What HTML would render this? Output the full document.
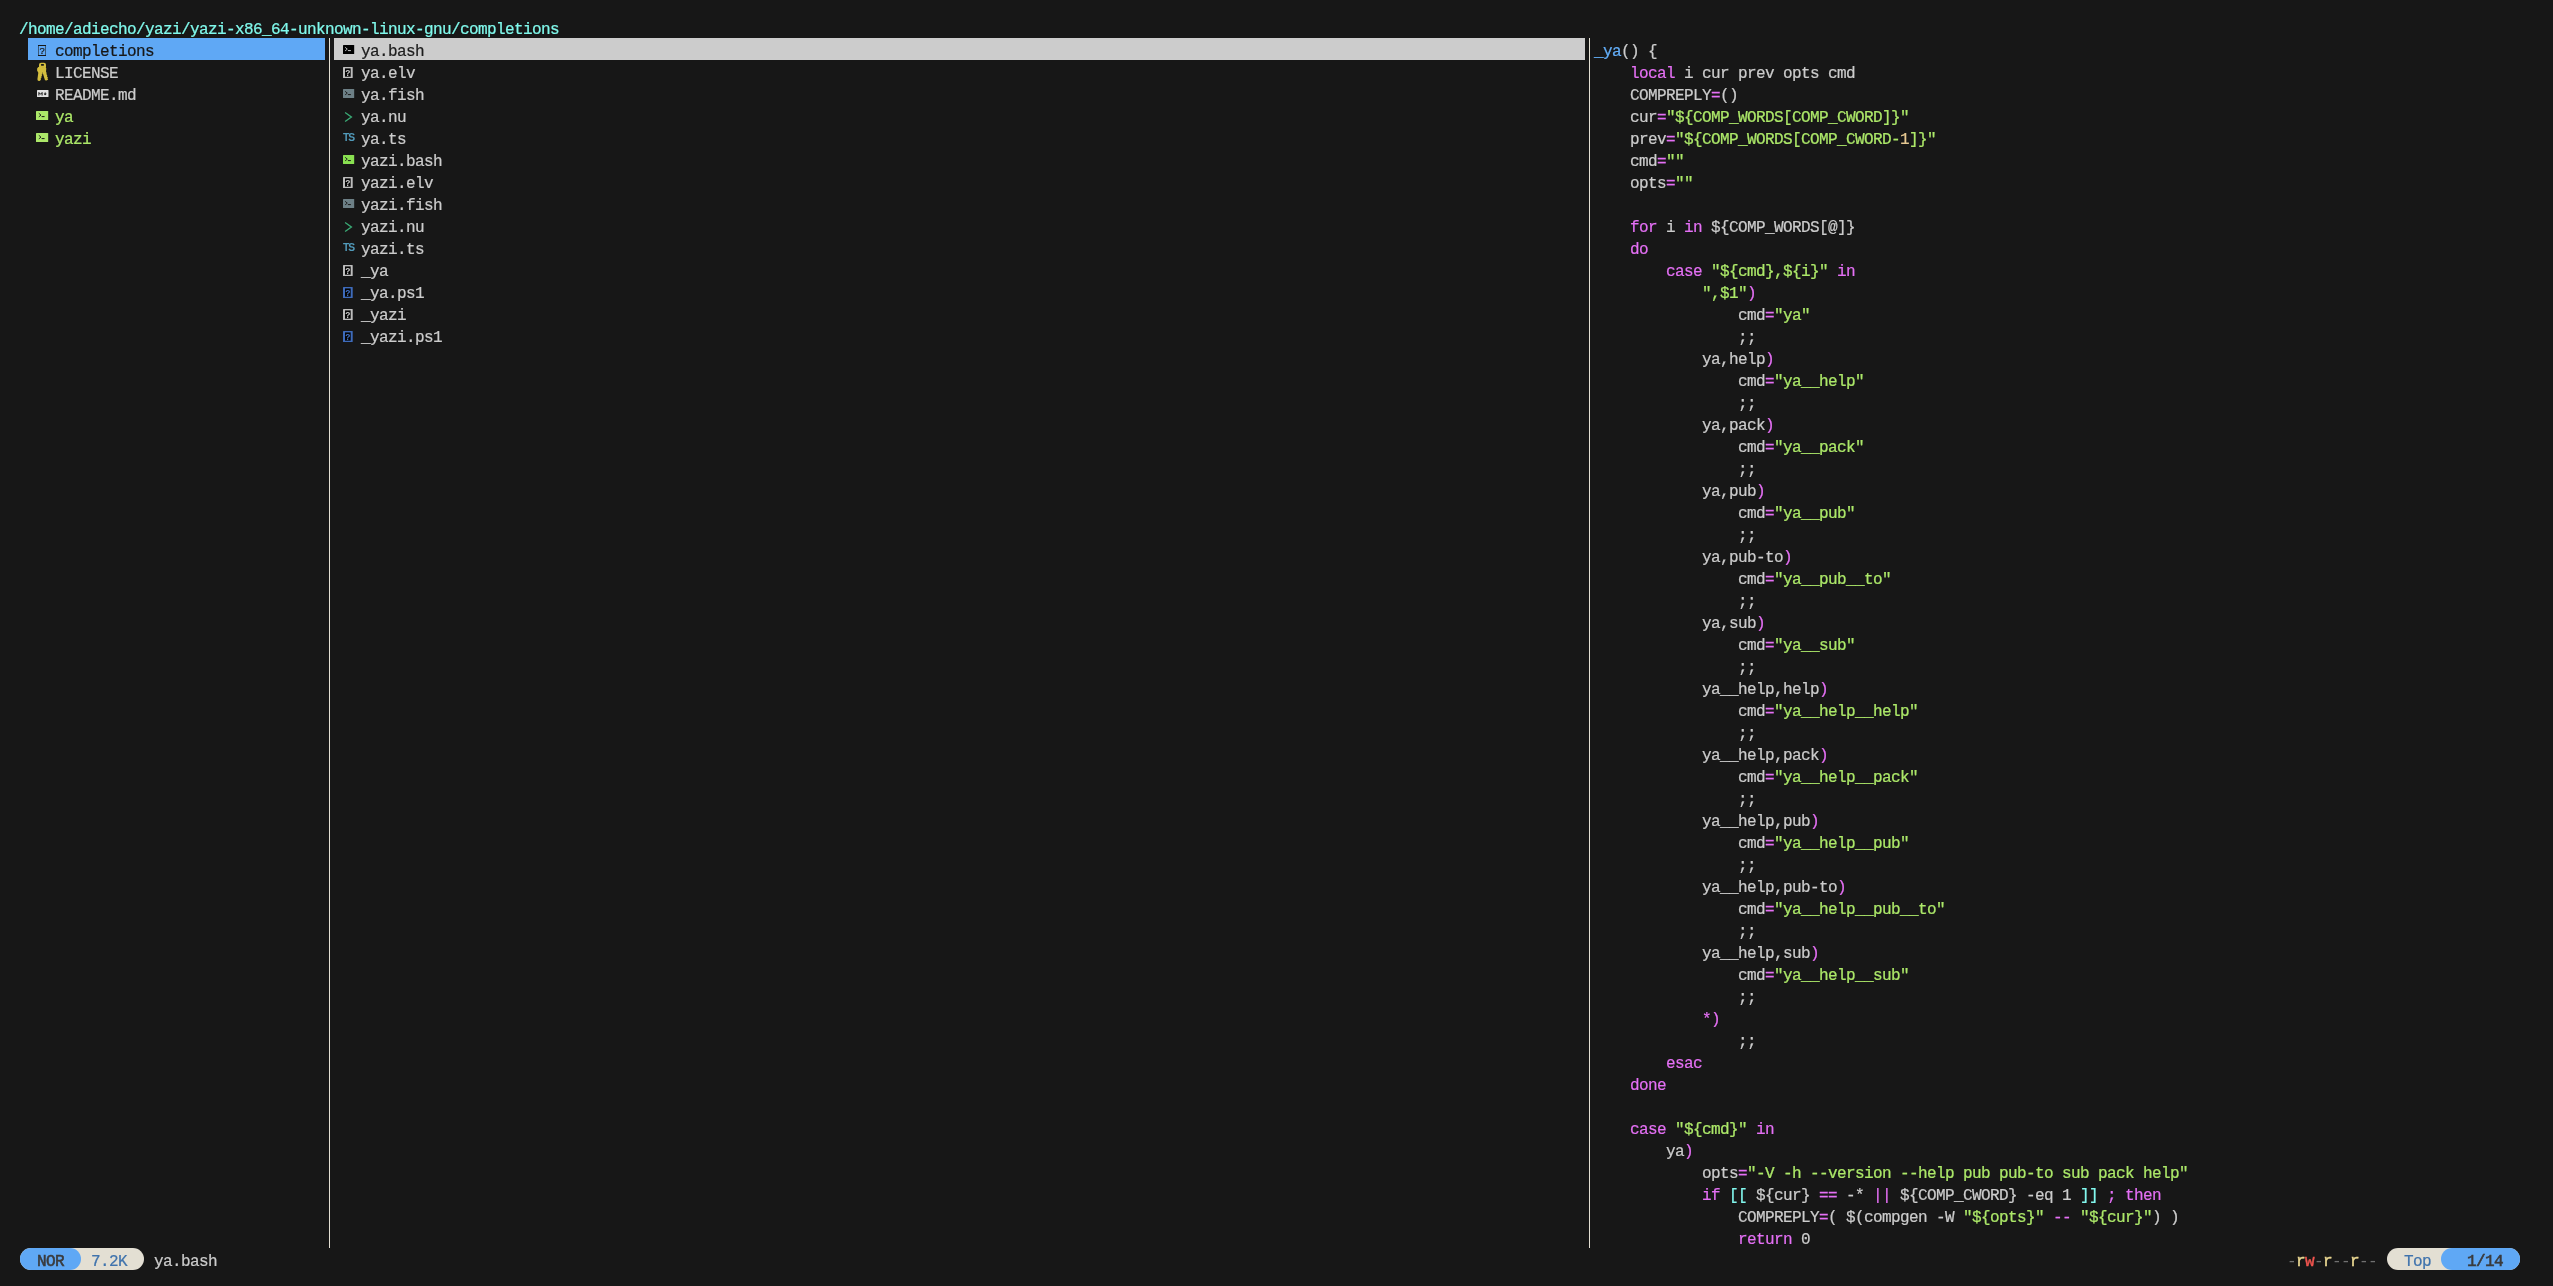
<!DOCTYPE html>
<html><head><meta charset="utf-8"><title>yazi</title><style>
*{margin:0;padding:0;box-sizing:border-box}
html,body{width:2553px;height:1286px;background:#171717;overflow:hidden}
body{position:relative;font-family:"Liberation Mono","DejaVu Sans Mono",monospace;font-size:16px;letter-spacing:-0.6016px;color:#cccccc;line-height:22px}
.t{position:absolute;white-space:pre;height:22px;line-height:22px;padding-top:3px;-webkit-text-stroke:0.22px currentColor}
#root{position:absolute;left:0;top:0;width:2553px;height:1286px;will-change:transform}
.b{position:absolute}
.m{color:#e570f5}.s{color:#ace869}.f{color:#63aef8}.c{color:#82f8ee}.n{color:#e6c892}.g{color:#ace869}
svg{position:absolute;overflow:visible}
</style></head><body><div id="root">
<div class="t" style="left:19px;top:16px;color:#80f9ec">/home/adiecho/yazi/yazi-x86_64-unknown-linux-gnu/completions</div>
<div class="b" style="left:329px;top:38px;width:1px;height:1210px;background:#e3dfd3;"></div>
<div class="b" style="left:1589px;top:38px;width:1px;height:1210px;background:#e3dfd3;"></div>
<div class="b" style="left:28px;top:38px;width:297px;height:22px;background:#5fa8f5;"></div>
<div class="b" style="left:334px;top:38px;width:1251px;height:22px;background:#cccccc;"></div>
<svg style="left:38px;top:45px" width="8" height="11" viewBox="0 0 8 11"><path d="M0 0.5 H8 M0 10.5 H8" stroke="#171717" stroke-width="1"/><path d="M0.5 0 V11 M7.5 0 V11" stroke="#171717" stroke-width="1" opacity="0.55"/><text x="4" y="8.9" font-size="9.4" font-family="Liberation Sans,sans-serif" text-anchor="middle" fill="#171717" stroke="#171717" stroke-width="0.2" style="letter-spacing:0">?</text></svg>
<div class="t" style="left:55px;top:38px;color:#171717">completions</div>
<svg style="left:37px;top:60px" width="12" height="22" viewBox="0 0 12 22"><g fill="#d3bd3e"><path fill-rule="evenodd" d="M4 2.7 H7 A2 2 0 0 1 9 4.7 V7.6 H2 V4.7 A2 2 0 0 1 4 2.7 Z M4.6 4.1 A0.7 0.7 0 0 0 3.9 4.8 V5.0 A0.7 0.7 0 0 0 4.6 5.7 H6.3 A0.7 0.7 0 0 0 7 5.0 V4.8 A0.7 0.7 0 0 0 6.3 4.1 Z"/><path d="M6.2 7 L8.6 6.9 L9.3 8.4 L9 11.6 L9.7 13.2 L9.3 14 L10.3 15.2 L9.9 16.2 L10.9 17.4 L10.5 18.6 L11.2 19.6 L9.6 20.6 L8 20.2 L5.6 12.5 Z"/><path d="M1.4 6.9 L4.2 6.6 L6.6 7.6 L6.9 10.2 L5.4 13 L5.7 14 L4.6 14.8 L5.2 15.9 L4.1 16.7 L4.6 17.8 L3.6 18.7 L4 19.8 L2.6 21 L0.9 20.7 L0.4 19.2 L1.3 12.8 L0.1 10.6 L0.2 8.2 Z"/></g></svg>
<div class="t" style="left:55px;top:60px;color:#cccccc">LICENSE</div>
<svg style="left:36.7px;top:90px" width="11.5" height="7.1" viewBox="0 0 11.5 7.1"><rect x="0" y="0" width="11.5" height="7.1" rx="0.6" fill="#e2e2e2"/><path d="M1.9 5.5 V2.5 L3.5 4.3 L5.1 2.5 V5.5" fill="none" stroke="#171717" stroke-width="1"/><path d="M8.2 2.2 V4.4 M7.2 3.8 L8.2 5.1 L9.2 3.8 Z" fill="#171717" stroke="#171717" stroke-width="0.7"/></svg>
<div class="t" style="left:55px;top:82px;color:#cccccc">README.md</div>
<svg style="left:36.2px;top:111px" width="12.2" height="9.1" viewBox="0 0 12.2 9.1"><rect x="0" y="0" width="12.2" height="9.1" rx="0.5" fill="#ace869"/><g transform="translate(0.7,0)"><path d="M2.1 2.3 L4.3 4.1 L2.1 5.9" fill="none" stroke="#171717" stroke-width="0.9"/><path d="M4.9 5.6 H7.9" stroke="#171717" stroke-width="1"/></g></svg>
<div class="t" style="left:55px;top:104px;color:#ace869">ya</div>
<svg style="left:36.2px;top:133px" width="12.2" height="9.1" viewBox="0 0 12.2 9.1"><rect x="0" y="0" width="12.2" height="9.1" rx="0.5" fill="#ace869"/><g transform="translate(0.7,0)"><path d="M2.1 2.3 L4.3 4.1 L2.1 5.9" fill="none" stroke="#171717" stroke-width="0.9"/><path d="M4.9 5.6 H7.9" stroke="#171717" stroke-width="1"/></g></svg>
<div class="t" style="left:55px;top:126px;color:#ace869">yazi</div>
<svg style="left:342.9px;top:45px" width="11.2" height="9.1" viewBox="0 0 11.2 9.1"><rect x="0" y="0" width="11.2" height="9.1" rx="0.5" fill="#000000"/><g transform="translate(0,0)"><path d="M2.1 2.3 L4.3 4.1 L2.1 5.9" fill="none" stroke="#cccccc" stroke-width="0.9"/><path d="M4.9 5.6 H7.9" stroke="#cccccc" stroke-width="1"/></g></svg>
<div class="t" style="left:361px;top:38px;color:#1c1c1c">ya.bash</div>
<svg style="left:343.2px;top:67px" width="9.7" height="11" viewBox="0 0 9.7 11"><rect x="0" y="0" width="9.7" height="11" rx="0.6" fill="#cccccc" opacity="0.92"/><rect x="2" y="1.4" width="5.7" height="8.3" fill="#050505"/><text x="4.85" y="8.9" font-size="8.4" font-family="Liberation Sans,sans-serif" font-weight="bold" text-anchor="middle" fill="#cccccc" style="letter-spacing:0">?</text></svg>
<div class="t" style="left:361px;top:60px;color:#cccccc">ya.elv</div>
<svg style="left:342.9px;top:89px" width="11.2" height="9.1" viewBox="0 0 11.2 9.1"><rect x="0" y="0" width="11.2" height="9.1" rx="0.5" fill="#6d8086"/><g transform="translate(0,0)"><path d="M2.1 2.3 L4.3 4.1 L2.1 5.9" fill="none" stroke="#171717" stroke-width="0.9"/><path d="M4.9 5.6 H7.9" stroke="#171717" stroke-width="1"/></g></svg>
<div class="t" style="left:361px;top:82px;color:#cccccc">ya.fish</div>
<svg style="left:343px;top:110.9px" width="10" height="12" viewBox="0 0 10 12"><path d="M2.1 1.5 L8.4 6 L2.1 10.5" fill="none" stroke="#3aaa75" stroke-width="1.35"/></svg>
<div class="t" style="left:361px;top:104px;color:#cccccc">ya.nu</div>
<svg style="left:342.7px;top:132px" width="13" height="11" viewBox="0 0 13 11"><text x="0" y="8.8" font-size="10.3" font-family="Liberation Sans,sans-serif" font-weight="bold" fill="#519aba" style="letter-spacing:-0.95px">TS</text></svg>
<div class="t" style="left:361px;top:126px;color:#cccccc">ya.ts</div>
<svg style="left:342.9px;top:155px" width="11.2" height="9.1" viewBox="0 0 11.2 9.1"><rect x="0" y="0" width="11.2" height="9.1" rx="0.5" fill="#89e051"/><g transform="translate(0,0)"><path d="M2.1 2.3 L4.3 4.1 L2.1 5.9" fill="none" stroke="#171717" stroke-width="0.9"/><path d="M4.9 5.6 H7.9" stroke="#171717" stroke-width="1"/></g></svg>
<div class="t" style="left:361px;top:148px;color:#cccccc">yazi.bash</div>
<svg style="left:343.2px;top:177px" width="9.7" height="11" viewBox="0 0 9.7 11"><rect x="0" y="0" width="9.7" height="11" rx="0.6" fill="#cccccc" opacity="0.92"/><rect x="2" y="1.4" width="5.7" height="8.3" fill="#050505"/><text x="4.85" y="8.9" font-size="8.4" font-family="Liberation Sans,sans-serif" font-weight="bold" text-anchor="middle" fill="#cccccc" style="letter-spacing:0">?</text></svg>
<div class="t" style="left:361px;top:170px;color:#cccccc">yazi.elv</div>
<svg style="left:342.9px;top:199px" width="11.2" height="9.1" viewBox="0 0 11.2 9.1"><rect x="0" y="0" width="11.2" height="9.1" rx="0.5" fill="#6d8086"/><g transform="translate(0,0)"><path d="M2.1 2.3 L4.3 4.1 L2.1 5.9" fill="none" stroke="#171717" stroke-width="0.9"/><path d="M4.9 5.6 H7.9" stroke="#171717" stroke-width="1"/></g></svg>
<div class="t" style="left:361px;top:192px;color:#cccccc">yazi.fish</div>
<svg style="left:343px;top:220.9px" width="10" height="12" viewBox="0 0 10 12"><path d="M2.1 1.5 L8.4 6 L2.1 10.5" fill="none" stroke="#3aaa75" stroke-width="1.35"/></svg>
<div class="t" style="left:361px;top:214px;color:#cccccc">yazi.nu</div>
<svg style="left:342.7px;top:242px" width="13" height="11" viewBox="0 0 13 11"><text x="0" y="8.8" font-size="10.3" font-family="Liberation Sans,sans-serif" font-weight="bold" fill="#519aba" style="letter-spacing:-0.95px">TS</text></svg>
<div class="t" style="left:361px;top:236px;color:#cccccc">yazi.ts</div>
<svg style="left:343.2px;top:265px" width="9.7" height="11" viewBox="0 0 9.7 11"><rect x="0" y="0" width="9.7" height="11" rx="0.6" fill="#cccccc" opacity="0.92"/><rect x="2" y="1.4" width="5.7" height="8.3" fill="#050505"/><text x="4.85" y="8.9" font-size="8.4" font-family="Liberation Sans,sans-serif" font-weight="bold" text-anchor="middle" fill="#cccccc" style="letter-spacing:0">?</text></svg>
<div class="t" style="left:361px;top:258px;color:#cccccc">_ya</div>
<svg style="left:343.2px;top:287px" width="9.7" height="11" viewBox="0 0 9.7 11"><rect x="0" y="0" width="9.7" height="11" rx="0.6" fill="#4273ca" opacity="0.92"/><rect x="2" y="1.4" width="5.7" height="8.3" fill="#050505"/><text x="4.85" y="8.9" font-size="8.4" font-family="Liberation Sans,sans-serif" font-weight="bold" text-anchor="middle" fill="#4273ca" style="letter-spacing:0">?</text></svg>
<div class="t" style="left:361px;top:280px;color:#cccccc">_ya.ps1</div>
<svg style="left:343.2px;top:309px" width="9.7" height="11" viewBox="0 0 9.7 11"><rect x="0" y="0" width="9.7" height="11" rx="0.6" fill="#cccccc" opacity="0.92"/><rect x="2" y="1.4" width="5.7" height="8.3" fill="#050505"/><text x="4.85" y="8.9" font-size="8.4" font-family="Liberation Sans,sans-serif" font-weight="bold" text-anchor="middle" fill="#cccccc" style="letter-spacing:0">?</text></svg>
<div class="t" style="left:361px;top:302px;color:#cccccc">_yazi</div>
<svg style="left:343.2px;top:331px" width="9.7" height="11" viewBox="0 0 9.7 11"><rect x="0" y="0" width="9.7" height="11" rx="0.6" fill="#4273ca" opacity="0.92"/><rect x="2" y="1.4" width="5.7" height="8.3" fill="#050505"/><text x="4.85" y="8.9" font-size="8.4" font-family="Liberation Sans,sans-serif" font-weight="bold" text-anchor="middle" fill="#4273ca" style="letter-spacing:0">?</text></svg>
<div class="t" style="left:361px;top:324px;color:#cccccc">_yazi.ps1</div>
<div class="t" style="left:1594px;top:38px;"><span class="f">_ya</span>() {</div>
<div class="t" style="left:1594px;top:60px;">    <span class="m">local</span> i cur prev opts cmd</div>
<div class="t" style="left:1594px;top:82px;">    COMPREPLY<span class="m">=</span>()</div>
<div class="t" style="left:1594px;top:104px;">    cur<span class="m">=</span><span class="s">"${COMP_WORDS[COMP_CWORD]}"</span></div>
<div class="t" style="left:1594px;top:126px;">    prev<span class="m">=</span><span class="s">"${COMP_WORDS[COMP_CWORD-</span><span class="n">1</span><span class="s">]}"</span></div>
<div class="t" style="left:1594px;top:148px;">    cmd<span class="m">=</span><span class="s">""</span></div>
<div class="t" style="left:1594px;top:170px;">    opts<span class="m">=</span><span class="s">""</span></div>
<div class="t" style="left:1594px;top:214px;">    <span class="m">for</span> i <span class="m">in</span> ${COMP_WORDS[@]}</div>
<div class="t" style="left:1594px;top:236px;">    <span class="m">do</span></div>
<div class="t" style="left:1594px;top:258px;">        <span class="m">case</span> <span class="s">"${cmd},${i}"</span> <span class="m">in</span></div>
<div class="t" style="left:1594px;top:280px;">            <span class="s">",$1"</span><span class="m">)</span></div>
<div class="t" style="left:1594px;top:302px;">                cmd<span class="m">=</span><span class="s">"ya"</span></div>
<div class="t" style="left:1594px;top:324px;">                ;;</div>
<div class="t" style="left:1594px;top:346px;">            ya,help<span class="m">)</span></div>
<div class="t" style="left:1594px;top:368px;">                cmd<span class="m">=</span><span class="s">"ya__help"</span></div>
<div class="t" style="left:1594px;top:390px;">                ;;</div>
<div class="t" style="left:1594px;top:412px;">            ya,pack<span class="m">)</span></div>
<div class="t" style="left:1594px;top:434px;">                cmd<span class="m">=</span><span class="s">"ya__pack"</span></div>
<div class="t" style="left:1594px;top:456px;">                ;;</div>
<div class="t" style="left:1594px;top:478px;">            ya,pub<span class="m">)</span></div>
<div class="t" style="left:1594px;top:500px;">                cmd<span class="m">=</span><span class="s">"ya__pub"</span></div>
<div class="t" style="left:1594px;top:522px;">                ;;</div>
<div class="t" style="left:1594px;top:544px;">            ya,pub-to<span class="m">)</span></div>
<div class="t" style="left:1594px;top:566px;">                cmd<span class="m">=</span><span class="s">"ya__pub__to"</span></div>
<div class="t" style="left:1594px;top:588px;">                ;;</div>
<div class="t" style="left:1594px;top:610px;">            ya,sub<span class="m">)</span></div>
<div class="t" style="left:1594px;top:632px;">                cmd<span class="m">=</span><span class="s">"ya__sub"</span></div>
<div class="t" style="left:1594px;top:654px;">                ;;</div>
<div class="t" style="left:1594px;top:676px;">            ya__help,help<span class="m">)</span></div>
<div class="t" style="left:1594px;top:698px;">                cmd<span class="m">=</span><span class="s">"ya__help__help"</span></div>
<div class="t" style="left:1594px;top:720px;">                ;;</div>
<div class="t" style="left:1594px;top:742px;">            ya__help,pack<span class="m">)</span></div>
<div class="t" style="left:1594px;top:764px;">                cmd<span class="m">=</span><span class="s">"ya__help__pack"</span></div>
<div class="t" style="left:1594px;top:786px;">                ;;</div>
<div class="t" style="left:1594px;top:808px;">            ya__help,pub<span class="m">)</span></div>
<div class="t" style="left:1594px;top:830px;">                cmd<span class="m">=</span><span class="s">"ya__help__pub"</span></div>
<div class="t" style="left:1594px;top:852px;">                ;;</div>
<div class="t" style="left:1594px;top:874px;">            ya__help,pub-to<span class="m">)</span></div>
<div class="t" style="left:1594px;top:896px;">                cmd<span class="m">=</span><span class="s">"ya__help__pub__to"</span></div>
<div class="t" style="left:1594px;top:918px;">                ;;</div>
<div class="t" style="left:1594px;top:940px;">            ya__help,sub<span class="m">)</span></div>
<div class="t" style="left:1594px;top:962px;">                cmd<span class="m">=</span><span class="s">"ya__help__sub"</span></div>
<div class="t" style="left:1594px;top:984px;">                ;;</div>
<div class="t" style="left:1594px;top:1006px;">            <span class="m">*)</span></div>
<div class="t" style="left:1594px;top:1028px;">                ;;</div>
<div class="t" style="left:1594px;top:1050px;">        <span class="m">esac</span></div>
<div class="t" style="left:1594px;top:1072px;">    <span class="m">done</span></div>
<div class="t" style="left:1594px;top:1116px;">    <span class="m">case</span> <span class="s">"${cmd}"</span> <span class="m">in</span></div>
<div class="t" style="left:1594px;top:1138px;">        ya<span class="m">)</span></div>
<div class="t" style="left:1594px;top:1160px;">            opts<span class="m">=</span><span class="s">"-V -h --version --help pub pub-to sub pack help"</span></div>
<div class="t" style="left:1594px;top:1182px;">            <span class="m">if</span> <span class="c">[[</span> ${cur} <span class="m">==</span> -* <span class="m">||</span> ${COMP_CWORD} -eq 1 <span class="c">]]</span> <span class="m">;</span> <span class="m">then</span></div>
<div class="t" style="left:1594px;top:1204px;">                COMPREPLY<span class="m">=</span>( $(compgen -W <span class="s">"${opts}"</span> <span class="m">--</span> <span class="s">"${cur}"</span>) )</div>
<div class="t" style="left:1594px;top:1226px;">                <span class="m">return</span> 0</div>
<div class="b" style="left:19.5px;top:1248px;width:124.9px;height:22px;background:#e3dfd3;border-radius:11px"></div>
<div class="b" style="left:19.5px;top:1248px;width:61.7px;height:22px;background:#5fa8f5;border-radius:11px"></div>
<div class="t" style="left:37px;top:1248px;color:#3a3b3d;-webkit-text-stroke:0.55px #3a3b3d">NOR</div>
<div class="t" style="left:91px;top:1248px;color:#3f73ad">7.2K</div>
<div class="t" style="left:154px;top:1248px;">ya.bash</div>
<div class="t" style="left:2287px;top:1248px;"><span style="color:#707070;-webkit-text-stroke:0">-</span><span style="color:#e8d690;-webkit-text-stroke:0.45px #e8d690">r</span><span style="color:#f2554f;-webkit-text-stroke:0.45px #f2554f">w</span><span style="color:#707070;-webkit-text-stroke:0">-</span><span style="color:#e8d690;-webkit-text-stroke:0.45px #e8d690">r</span><span style="color:#707070;-webkit-text-stroke:0">--</span><span style="color:#e8d690;-webkit-text-stroke:0.45px #e8d690">r</span><span style="color:#707070;-webkit-text-stroke:0">--</span></div>
<div class="b" style="left:2386.5px;top:1248px;width:133.9000000000001px;height:22px;background:#e3dfd3;border-radius:11px"></div>
<div class="b" style="left:2440.9px;top:1248px;width:79.5px;height:22px;background:#5fa8f5;border-radius:11px"></div>
<div class="t" style="left:2404px;top:1248px;color:#3f73ad">Top</div>
<div class="t" style="left:2467px;top:1248px;color:#3a3b3d;-webkit-text-stroke:0.55px #3a3b3d">1/14</div>
</div></body></html>
